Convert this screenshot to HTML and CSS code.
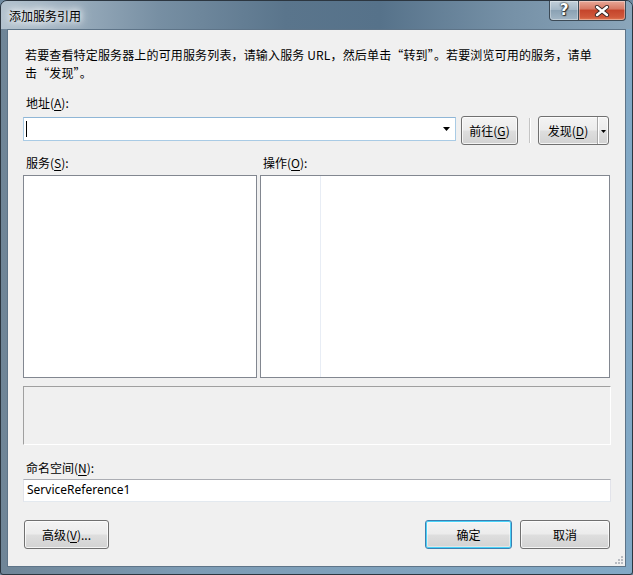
FILE: index.html
```html
<!DOCTYPE html>
<html lang="zh-CN">
<head>
<meta charset="utf-8">
<title>添加服务引用</title>
<link rel="stylesheet" href="styles.css">
</head>
<body>
<div class="window">
  <div class="titlebar">
    <span class="title">添加服务引用</span>
    <div class="caption">
      <div class="cap cap-help"><span class="cap-q">?</span></div>
      <div class="cap cap-close">
        <svg width="16" height="12" viewBox="0 0 16 12"><path d="M3 2 L13 10 M13 2 L3 10" stroke="#3a2a28" stroke-width="4.2" stroke-linecap="round"/><path d="M3 2 L13 10 M13 2 L3 10" stroke="#fff" stroke-width="2.4" stroke-linecap="round"/></svg>
      </div>
    </div>
  </div>
  <div class="client">
    <p class="desc">若要查看特定服务器上的可用服务列表，请输入服务 URL，然后单击“转到”。若要浏览可用的服务，请单<br>击“发现”。</p>
    <div class="label">地址(<u>A</u>):</div>
    <div class="addr-row">
      <div class="combo">
        <span class="caret"></span>
        <svg class="combo-arrow" width="7" height="4" viewBox="0 0 7 4"><path d="M0 0 H7 L3.5 4 Z" fill="#000"/></svg>
      </div>
      <button class="btn btn-go">前往(<u>G</u>)</button>
      <span class="sep"></span>
      <div class="btn split">
        <span class="split-main">发现(<u>D</u>)</span>
        <span class="split-arrow"><svg width="5" height="3" viewBox="0 0 5 3"><path d="M0 0 H5 L2.5 3 Z" fill="#000"/></svg></span>
      </div>
    </div>
    <div class="lists-head">
      <div class="label">服务(<u>S</u>):</div>
      <div class="label">操作(<u>O</u>):</div>
    </div>
    <div class="lists">
      <div class="list"></div>
      <div class="list list-ops"><span class="ops-col"></span></div>
    </div>
    <div class="info-panel"></div>
    <div class="label label-ns">命名空间(<u>N</u>):</div>
    <div class="textbox">ServiceReference1</div>
    <div class="footer">
      <button class="btn btn-adv">高级(<u>V</u>)...</button>
      <div class="footer-right">
        <button class="btn btn-ok">确定</button>
        <button class="btn btn-cancel">取消</button>
      </div>
    </div>
    <svg class="grip" width="8" height="8" viewBox="0 0 8 8">
      <rect x="6" y="0" width="2" height="2" fill="#b8bcc2"/>
      <rect x="3" y="3" width="2" height="2" fill="#b8bcc2"/>
      <rect x="6" y="3" width="2" height="2" fill="#b8bcc2"/>
      <rect x="0" y="6" width="2" height="2" fill="#b8bcc2"/>
      <rect x="3" y="6" width="2" height="2" fill="#b8bcc2"/>
      <rect x="6" y="6" width="2" height="2" fill="#b8bcc2"/>
    </svg>
  </div>
</div>
</body>
</html>
```
FILE: styles.css
```css
* { box-sizing: border-box; }
html, body { margin: 0; padding: 0; background: #6f8aa0; }
body {
  font-family: "Noto Sans CJK SC", "Noto Sans", sans-serif;
  font-size: 12px;
  color: #000;
}
.window {
  width: 633px;
  height: 575px;
  border: 1px solid #2c3640;
  border-radius: 7px 7px 3px 3px;
  background: linear-gradient(to right, #6f8597 0%, #7d9cb5 30%, #82a9c6 100%);
  display: flex;
  flex-direction: column;
  overflow: hidden;
}
.titlebar {
  height: 28px;
  display: flex;
  align-items: flex-start;
  background: linear-gradient(to right, #b3c2ce 0%, #a2b4c3 8%, #778fa3 25%, #5a758c 45%, #56728a 60%, #7590a6 80%, #8ba6bb 100%);
  flex: none;
}
.title {
  align-self: center;
  padding-left: 8px;
  padding-top: 1px;
  line-height: 16px;
  text-shadow: 0 0 6px #fff, 0 0 10px #fff, 0 0 14px #fff;
}
.caption {
  margin-left: auto;
  margin-right: 6px;
  display: flex;
}
.cap {
  height: 20px;
  border: 1px solid #3c4a56;
  border-top: none;
  display: flex;
  align-items: center;
  justify-content: center;
  box-shadow: inset 0 0 0 1px rgba(255,255,255,0.35);
}
.cap-help {
  width: 29px;
  border-radius: 0 0 0 4px;
  border-right: none;
  background: linear-gradient(#c3d0da 0%, #a5b8c7 45%, #8ba2b4 50%, #a2b6c5 100%);
}
.cap-q {
  font-family: "DejaVu Sans", sans-serif;
  font-weight: bold;
  font-size: 15px;
  line-height: 15px;
  color: #fff;
  text-shadow: 0 0 1px #222, 0 0 2px #222, 1px 1px 1px #333;
}
.cap-close {
  width: 48px;
  border-radius: 0 0 4px 0;
  background: linear-gradient(#e8a898 0%, #d77a66 40%, #c5452c 50%, #d0583b 85%, #e07a55 100%);
}
.client {
  position: relative;
  margin: 0 6px 7px 6px;
  flex: 1;
  border: 1px solid #5e7488;
  background: #f0f0f0;
  padding: 16px 14px 0 15px;
}
.desc {
  margin: 0;
  padding-left: 2px;
  line-height: 18px;
  white-space: nowrap;
  letter-spacing: 0.15px;
}
.label {
  line-height: 18px;
  padding-left: 3px;
  margin-top: 12px;
}
.label u, .btn u { text-underline-offset: 2px; }
.addr-row {
  margin-top: 4px;
  height: 29px;
  display: flex;
  align-items: flex-start;
}
.combo {
  position: relative;
  width: 433px;
  height: 24px;
  margin-top: 1px;
  background: #fff;
  border: 1px solid #a9cbe5;
  border-top-color: #8fb6d6;
}
.caret {
  position: absolute;
  left: 2px;
  top: 3px;
  width: 1px;
  height: 16px;
  background: #000;
}
.combo-arrow {
  position: absolute;
  right: 5px;
  top: 9px;
}
.btn {
  font-family: "Noto Sans CJK SC", "Noto Sans", sans-serif;
  font-size: 12px;
  color: #000;
  height: 29px;
  padding: 0;
  border: 1px solid #707070;
  border-radius: 3px;
  background: linear-gradient(#f3f3f3 0%, #ececec 48%, #dedede 52%, #d2d2d2 100%);
  box-shadow: inset 0 0 0 1px rgba(255,255,255,0.75);
  display: flex;
  align-items: center;
  justify-content: center;
  line-height: 16px;
}
.btn-go {
  width: 57px;
  margin-left: 5px;
}
.sep {
  width: 2px;
  height: 25px;
  margin: 2px 7px 0 11px;
  border-left: 1px solid #c4c4c4;
  border-right: 1px solid #fff;
}
.split {
  width: 71px;
  justify-content: flex-start;
}
.split-main {
  width: 58px;
  text-align: center;
}
.split-arrow {
  height: 100%;
  flex: 1;
  border-left: 1px solid #a8a8a8;
  box-shadow: inset 1px 0 0 #fff;
  display: flex;
  align-items: center;
  justify-content: center;
  padding-top: 1px;
}
.lists-head {
  display: grid;
  grid-template-columns: 234px 350px;
  column-gap: 3px;
}
.lists-head .label { margin-top: 9px; }
.lists {
  margin-top: 3px;
  display: grid;
  grid-template-columns: 234px 350px;
  column-gap: 3px;
  height: 203px;
}
.list {
  background: #fff;
  border: 1px solid #828790;
}
.list-ops { display: flex; }
.ops-col {
  width: 60px;
  height: 100%;
  border-right: 1px solid #e8edf5;
}
.info-panel {
  margin-top: 8px;
  height: 59px;
  border: 1px solid;
  border-color: #a0a0a0 #fff #fff #a0a0a0;
  background: #f0f0f0;
}
.label-ns { margin-top: 14px; }
.textbox {
  margin-top: 2px;
  height: 23px;
  background: #fff;
  border: 1px solid;
  border-color: #abadb3 #e2e3ea #e3e9ef #e2e3ea;
  padding-left: 3px;
  font-family: "Noto Sans", sans-serif;
  line-height: 20px;
}
.footer {
  margin-top: 18px;
  display: flex;
  padding-left: 1px;
  padding-right: 1px;
}
.btn-adv { width: 85px; }
.footer-right {
  margin-left: auto;
  display: flex;
  gap: 8px;
}
.btn-ok {
  width: 87px;
  border-color: #3c7fb1;
  box-shadow: inset 0 0 0 1px #48d2f8, inset 0 0 0 2px rgba(255,255,255,0.4);
}
.btn-cancel { width: 90px; }
.grip {
  position: absolute;
  right: 2px;
  bottom: 2px;
}
```
